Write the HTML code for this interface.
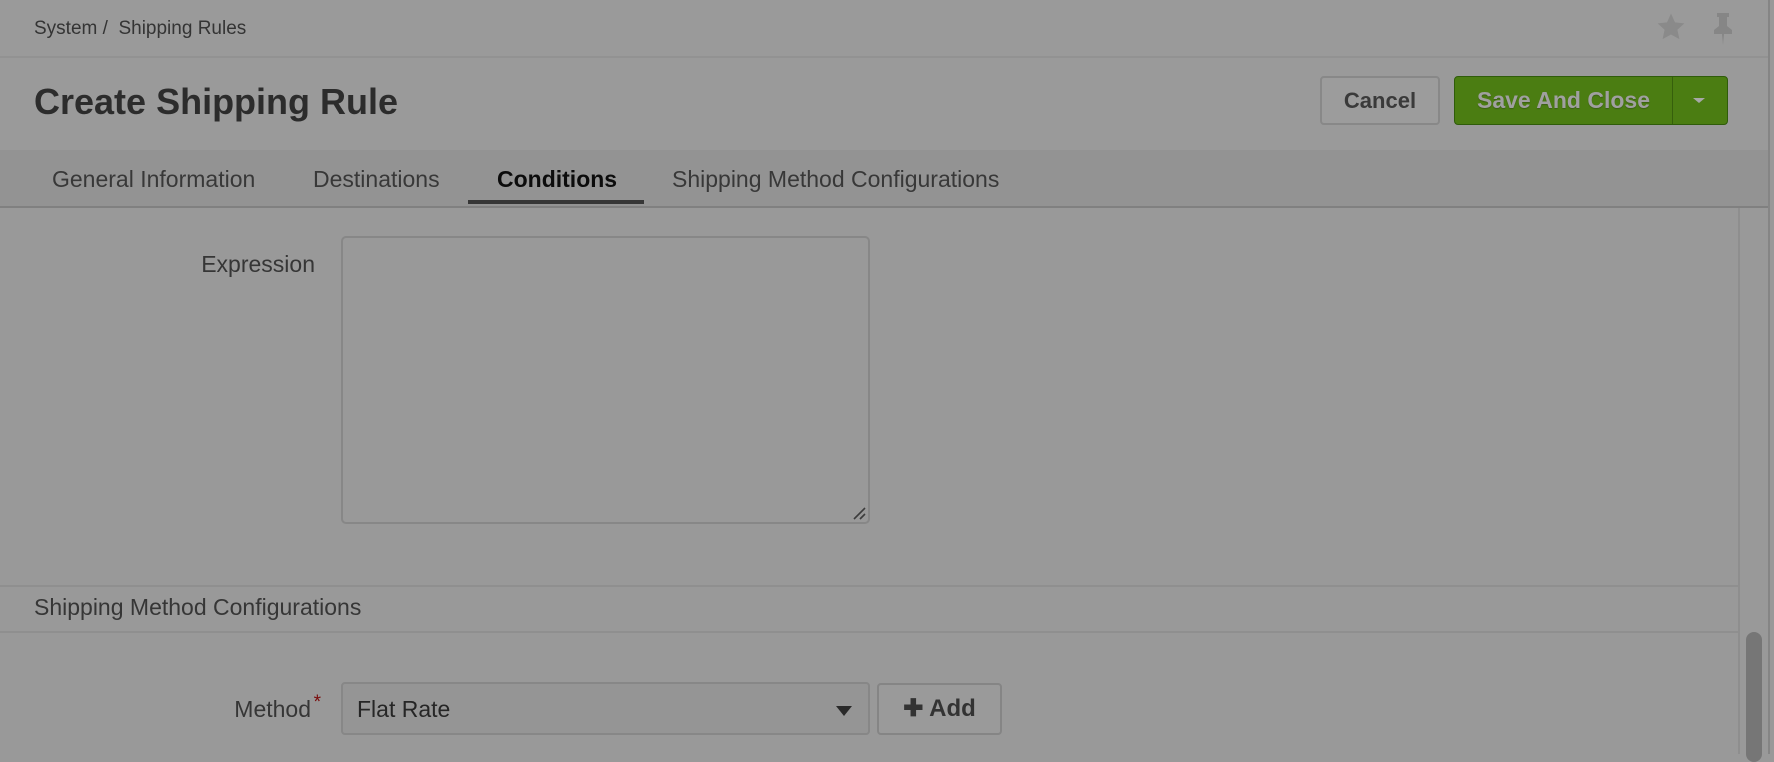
<!DOCTYPE html>
<html><head><meta charset="utf-8"><style>
*{margin:0;padding:0;box-sizing:border-box}
body{width:1774px;height:754px;overflow:hidden;background:#999;font-family:"Liberation Sans",Arial,sans-serif;color:#303030;position:relative}
.a{position:absolute}
</style></head><body>
<div class="a" style="left:0;top:0;width:1768px;height:150px;background:#9a9a9a"></div>
<div class="a" style="left:34px;top:18px;font-size:19px;color:#343434;white-space:nowrap">System /&nbsp;&nbsp;Shipping Rules</div>
<div class="a" style="left:0;top:56px;width:1768px;height:2px;background:#929292"></div>
<div class="a" style="left:34px;top:81px;font-size:36px;font-weight:bold;color:#2c2c2c;white-space:nowrap">Create Shipping Rule</div>
<svg class="a" style="left:1654px;top:11px" width="34" height="32" viewBox="0 0 24 24"><path d="M12 2l3 6.5 7 .8-5.2 4.8 1.5 7L12 17.6 5.7 21.1l1.5-7L2 9.3l7-.8z" fill="#8a8a8a"/></svg>
<svg class="a" style="left:1711px;top:12px" width="24" height="34" viewBox="0 0 24 34"><path d="M6 1h12v4h-2v9l5 4v4H3v-4l5-4V5H6z M11 22h2l-1 11z" fill="#868686"/></svg>
<div class="a" style="left:1768px;top:0;width:2px;height:754px;background:#858585"></div>
<div class="a" style="left:1320px;top:76px;width:120px;height:49px;border:2px solid #888;border-radius:4px;background:#9c9c9c;font-size:22px;font-weight:bold;color:#3a3a3a;text-align:center;line-height:45px">Cancel</div>
<div class="a" style="left:1454px;top:76px;width:274px;height:49px;border:1px solid #2f5c0a;border-radius:4px;background:#4b7d12"></div>
<div class="a" style="left:1672px;top:77px;width:1px;height:47px;background:#365f0c"></div>
<div class="a" style="left:1455px;top:77px;width:217px;height:47px;font-size:23px;font-weight:bold;color:#a0a0a0;text-align:center;line-height:47px;text-shadow:0 1px 1px #3b5d17">Save And Close</div>
<div class="a" style="left:1693px;top:98px;width:0;height:0;border-left:6px solid transparent;border-right:6px solid transparent;border-top:5px solid #a8a8a8"></div>
<div class="a" style="left:0;top:150px;width:1768px;height:57px;background:#939393"></div>
<div class="a" style="left:0;top:206px;width:1768px;height:2px;background:#808080"></div>
<div class="a" style="left:52px;top:166px;font-size:23px;color:#383838;white-space:nowrap">General Information</div>
<div class="a" style="left:313px;top:166px;font-size:23px;color:#383838;white-space:nowrap">Destinations</div>
<div class="a" style="left:497px;top:166px;font-size:23px;font-weight:bold;color:#0c0c0c;white-space:nowrap">Conditions</div>
<div class="a" style="left:672px;top:166px;font-size:23px;color:#383838;white-space:nowrap">Shipping Method Configurations</div>
<div class="a" style="left:468px;top:200px;width:176px;height:4px;background:#363636"></div>
<div class="a" style="left:1738px;top:208px;width:2px;height:546px;background:#8e8e8e"></div>
<div class="a" style="left:1746px;top:632px;width:16px;height:130px;border-radius:8px;background:#767676"></div>
<div class="a" style="left:0;top:251px;width:315px;text-align:right;font-size:23px;color:#363636">Expression</div>
<div class="a" style="left:341px;top:236px;width:529px;height:288px;border:2px solid #878787;border-radius:5px"></div>
<svg class="a" style="left:852px;top:506px" width="14" height="14"><path d="M2 13L13 2M8 13L13 8" stroke="#3c3c3c" stroke-width="1.6"/></svg>
<div class="a" style="left:0;top:585px;width:1738px;height:2px;background:#8f8f8f"></div>
<div class="a" style="left:34px;top:594px;font-size:23px;color:#363636;white-space:nowrap">Shipping Method Configurations</div>
<div class="a" style="left:0;top:631px;width:1738px;height:2px;background:#8f8f8f"></div>
<div class="a" style="left:0;top:696px;width:311px;text-align:right;font-size:23px;color:#363636">Method<span style="color:#7a0b0b;position:absolute;right:-10px;top:-4px;font-size:19px">*</span></div>
<div class="a" style="left:341px;top:682px;width:529px;height:53px;border:2px solid #878787;border-radius:4px;background:#959595"></div>
<div class="a" style="left:357px;top:696px;font-size:23px;color:#262626">Flat Rate</div>
<div class="a" style="left:836px;top:706px;width:0;height:0;border-left:8px solid transparent;border-right:8px solid transparent;border-top:10px solid #2a2a2a"></div>
<div class="a" style="left:877px;top:683px;width:125px;height:52px;border:2px solid #858585;border-radius:4px;background:#9a9a9a;font-size:24px;font-weight:bold;color:#333;text-align:center;line-height:48px">✚ Add</div>
</body></html>
